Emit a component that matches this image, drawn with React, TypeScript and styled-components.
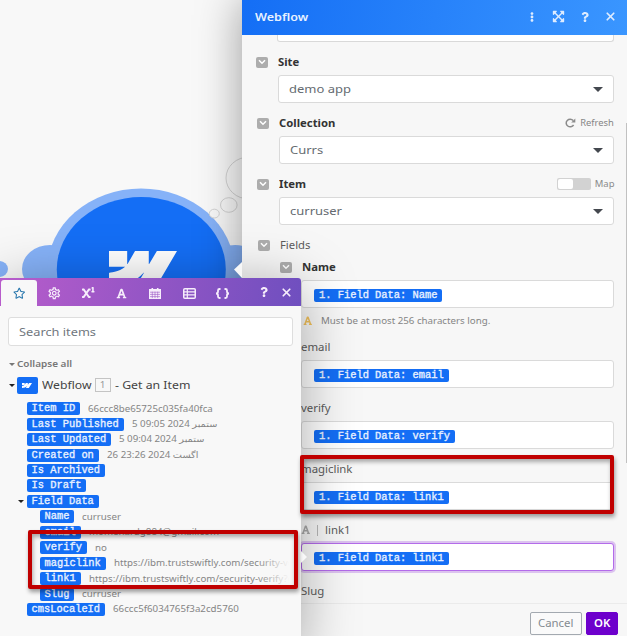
import React from "react";
import styled, { createGlobalStyle, css } from "styled-components";
import {
  FaRegStar,
  FaSuperscript,
  FaFont,
  FaExpandArrowsAlt,
  FaQuestion,
  FaEllipsisV,
} from "react-icons/fa";
import { MdOutlineSettings } from "react-icons/md";
import { X } from "lucide-react";

const GlobalStyle = createGlobalStyle`
  * { box-sizing: border-box; }
  body {
    margin: 0;
    overflow: hidden;
    font-family: "Noto Sans", "Open Sans", "DejaVu Sans", sans-serif;
  }
`;

const STRETCH = 1.13;

const Text = styled.span<{
  $size: number;
  $color?: string;
  $bold?: boolean;
  $weight?: number;
  $width?: number;
  $origin?: string;
}>`
  display: inline-block;
  flex: none;
  white-space: pre;
  font-size: ${(p) => p.$size / STRETCH}px;
  line-height: 1.2;
  color: ${(p) => p.$color ?? "#4d4d4d"};
  font-weight: ${(p) => p.$weight ?? (p.$bold ? 700 : 400)};
  transform: scaleX(${STRETCH});
  transform-origin: ${(p) => p.$origin ?? "left"} center;
  ${(p) => p.$width && css`width: ${p.$width}px;`}
`;

const Screen = styled.main`
  position: relative;
  display: flex;
  justify-content: flex-end;
  width: 627px;
  height: 636px;
  overflow: hidden;
  background: #f8f8f8;
`;

const Scene = styled.svg`
  position: absolute;
  left: 0;
  top: 0;
`;

/* ---------- settings panel ---------- */

const Settings = styled.section`
  position: relative;
  display: flex;
  flex-direction: column;
  width: 385px;
  height: 636px;
  background: #f7f7f7;
  box-shadow: 0 0 42px rgba(0, 0, 0, 0.38);
`;

const SettingsHeader = styled.header`
  display: flex;
  align-items: center;
  justify-content: space-between;
  flex: none;
  height: 35px;
  padding: 0 12px 2px 13px;
  background: linear-gradient(100deg, #146ef5, #3a96ff);
`;

const HeaderTools = styled.div`
  display: grid;
  grid-template-columns: 24px 28px 25px 26px;
  align-items: center;
  justify-items: center;
  color: #deecff;
  margin-right: -8px;
`;

const Form = styled.div`
  flex: 1;
  min-height: 0;
  overflow: hidden;
  padding-right: 13px;
`;

const CutField = styled.div`
  height: 7px;
  margin: 0 0 7px 35px;
  border: 1px solid #d9d9d9;
  border-top: 0;
  border-radius: 0 0 3px 3px;
  background: #fff;
`;

const Field = styled.div<{ $indent: number }>`
  height: 61px;
  padding-left: ${(p) => p.$indent}px;
`;

const LabelRow = styled.div<{ $gap?: number }>`
  display: flex;
  align-items: center;
  height: 26px;
  gap: ${(p) => p.$gap ?? 10}px;
`;

const GroupRow = styled(LabelRow)`
  height: 22px;
  padding: 4px 0 0 16px;
`;

const HintRow = styled.div`
  display: flex;
  align-items: center;
  height: 26px;
  margin-top: -7px;
  padding-left: 61px;
  gap: 8px;
`;

const LabelExtra = styled.span<{ $gap: number }>`
  display: flex;
  align-items: center;
  gap: ${(p) => p.$gap}px;
  margin-left: auto;
`;

const Box = styled.div<{ $offset?: number; $active?: boolean }>`
  display: flex;
  align-items: center;
  justify-content: space-between;
  height: 28px;
  margin-left: ${(p) => p.$offset ?? 0}px;
  padding: 0 10px;
  border: 1px solid #dadada;
  border-radius: 3px;
  background: #fff;
  ${(p) =>
    p.$active &&
    css`
      border-color: #b36bea;
      box-shadow: 0 0 0 2px #dcc3ef;
    `}
`;

const TokenBox = styled(Box)`
  padding: 2px 10px 0 12px;
`;

const Toggle = styled.span`
  display: flex;
  align-items: center;
  justify-content: center;
  flex: none;
  width: 12px;
  height: 11px;
  border-radius: 2px;
  background: #adadad;
`;

const Caret = styled.i<{ $size: number; $color: string }>`
  flex: none;
  border: ${(p) => p.$size}px solid transparent;
  border-top: ${(p) => p.$size}px solid ${(p) => p.$color};
  border-bottom: 0;
`;

const Pill = styled.span`
  flex: none;
  height: 13px;
  padding: 0 5px;
  border-radius: 2px;
  background: #146ef5;
  color: #e8f1ff;
  font: 10.4px/12px "Liberation Mono", monospace;
  -webkit-text-stroke: 0.35px #e8f1ff;
  white-space: pre;
`;

const Switch = styled.span`
  width: 34px;
  height: 12px;
  padding: 1px;
  border-radius: 2px;
  background: #d2d2d2;
  &::before {
    content: "";
    display: block;
    width: 15px;
    height: 10px;
    border-radius: 2px;
    background: #fff;
  }
`;

const Divider = styled.span`
  width: 1px;
  height: 11px;
  background: #b8b8b8;
`;

const Footer = styled.footer`
  display: flex;
  justify-content: flex-end;
  gap: 4px;
  flex: none;
  height: 33px;
  padding: 8px 9px 0 0;
  border-top: 1px solid #ebebeb;
`;

const Button = styled.button<{ $primary?: boolean }>`
  display: flex;
  align-items: center;
  justify-content: center;
  width: ${(p) => (p.$primary ? 32 : 52)}px;
  height: 23px;
  padding: 0;
  font-family: inherit;
  border: 1px solid ${(p) => (p.$primary ? "#6d00cc" : "#a3a9b0")};
  border-radius: 2px;
  background: ${(p) => (p.$primary ? "#6d00cc" : "#fafafa")};
`;

const Scrollbar = styled.div`
  position: absolute;
  right: 0;
  top: 123px;
  width: 1.5px;
  height: 340px;
  background: #c1c1c1;
`;

/* ---------- item picker ---------- */

const Picker = styled.section`
  position: absolute;
  left: 0;
  top: 278px;
  width: 301px;
  height: 370px;
  border-radius: 0 3px 0 0;
  background: #f8f8f8;
  box-shadow: 0 8px 56px rgba(0, 0, 0, 0.34);
`;

const Tabs = styled.nav`
  display: flex;
  align-items: flex-end;
  height: 28px;
  padding-left: 1px;
  border-radius: 0 3px 0 0;
  background: linear-gradient(100deg, #b85ccb, #6f4fbf);
  color: #f6edfb;
`;

const Tab = styled.span<{ $active?: boolean; $width?: number }>`
  display: flex;
  align-items: center;
  justify-content: center;
  width: ${(p) => p.$width ?? 33.6}px;
  height: 26px;
  padding-top: 1px;
  border-radius: 3px 3px 0 0;
  ${(p) =>
    p.$active &&
    css`
      background: #f8f8f8;
      color: #2877ad;
    `}
`;

const TabsEnd = styled.span`
  display: flex;
  align-items: center;
  justify-content: space-between;
  height: 28px;
  width: 34px;
  margin: 0 8px 0 auto;
`;

const Search = styled.div`
  display: flex;
  align-items: center;
  width: 285px;
  height: 29px;
  margin: 11px 0 0 7.5px;
  padding-left: 10px;
  border: 1px solid #dedede;
  border-radius: 3px;
  background: #fff;
`;

const CollapseRow = styled.div`
  display: flex;
  align-items: center;
  height: 12px;
  gap: 2.5px;
  margin: 12px 0 0 8.5px;
`;

const ModuleRow = styled.div`
  display: flex;
  align-items: center;
  height: 18px;
  margin: 6px 0 7px 8.5px;
`;

const ModuleLogo = styled.span`
  display: flex;
  align-items: center;
  justify-content: center;
  width: 20.5px;
  height: 17px;
  margin: 0 4.5px 0 2.5px;
  border-radius: 2px;
  background: #146ef5;
`;

const Badge = styled.span`
  display: flex;
  align-items: center;
  justify-content: center;
  width: 16px;
  height: 14px;
  margin-right: 4px;
  border: 1px solid #c4c4c4;
`;

const ItemList = styled.div`
  position: relative;
  width: 293px;
  overflow: hidden;
  &::after {
    content: "";
    position: absolute;
    top: 0;
    right: 0;
    width: 36px;
    height: 100%;
    background: linear-gradient(90deg, rgba(248, 248, 248, 0), #f8f8f8 90%);
  }
`;

const ItemRow = styled.div<{ $depth: number }>`
  display: flex;
  align-items: center;
  height: 15.46px;
  padding-left: ${(p) => (p.$depth === 2 ? 39.5 : 26.5)}px;
  gap: 8px;
`;

const RowCaret = styled.span`
  display: flex;
  width: 8px;
  margin: 0 -8px;
  transform: translateX(-1px);
`;

/* ---------- overlays ---------- */

const Highlight = styled.div<{ $x: number; $y: number; $w: number; $h: number }>`
  position: absolute;
  left: ${(p) => p.$x}px;
  top: ${(p) => p.$y}px;
  width: ${(p) => p.$w}px;
  height: ${(p) => p.$h}px;
  border: 4px solid #c00000;
  border-radius: 2px;
  box-shadow: 1px 3px 4px rgba(0, 0, 0, 0.38), inset 1px 3px 4px rgba(0, 0, 0, 0.32);
`;

const FieldNotch = styled.svg`
  position: absolute;
  left: 301px;
  top: 550px;
`;

const PanelNotch = styled.svg`
  position: absolute;
  left: 234px;
  top: 262px;
`;

const LOGO =
  "m24 4.515-7.658 14.97H9.149l3.205-6.204h-.144C9.566 16.713 5.621 18.973 0 19.485v-6.118s3.596-.213 5.71-2.435H0V4.515h6.417v5.278l.144-.001 2.622-5.277h4.854v5.244h.144l2.72-5.244H24Z";

const Chevron = () => (
  <Toggle>
    <svg width="8" height="6" viewBox="0 0 8 6">
      <path d="M1 1.3 4 4.2 7 1.3" fill="none" stroke="#fff" strokeWidth="1.5" />
    </svg>
  </Toggle>
);

const CalendarIcon = () => (
  <svg width="12" height="11" viewBox="0 0 12 12" preserveAspectRatio="none">
    <path d="M2.5 0h1.6v1.2h3.8V0h1.6v1.2H12V12H0V1.2h2.5Z" fill="currentColor" />
    <path d="M1 4.6h10M1 7h10M1 9.4h10M3.3 4v7M6 4v7M8.7 4v7" stroke="#9a55c6" strokeWidth=".6" />
  </svg>
);

const TableIcon = () => (
  <svg width="13" height="11" viewBox="0 0 13 11">
    <rect x=".75" y=".75" width="11.5" height="9.5" rx="1" fill="none" stroke="currentColor" strokeWidth="1.5" />
    <path d="M1 3.8h11M1 6.9h11M4.3 1v9" stroke="currentColor" strokeWidth="1.2" />
  </svg>
);

const BracesIcon = () => (
  <svg width="15" height="11" viewBox="0 0 15 11" fill="none" stroke="currentColor" strokeWidth="1.8">
    <path d="M5.5 1H4.6Q3 1 3 2.5v1.3Q3 5.5 1 5.5q2 0 2 1.7v1.3Q3 10 4.6 10h.9M9.5 1h.9Q12 1 12 2.5v1.3q0 1.7 2 1.7-2 0-2 1.7v1.3Q12 10 10.4 10h-.9" />
  </svg>
);

const RefreshIcon = () => (
  <svg width="11" height="10" viewBox="0 0 11 10" fill="none" stroke="#8b8b8b" strokeWidth="1.5">
    <path d="M8.6 7A4 3.7 0 1 1 8.2 2.6" />
    <path d="M10.3.4v4H6.2Z" fill="#8b8b8b" stroke="none" />
  </svg>
);

const SelectField = ({
  label,
  value,
  indent,
  extra,
}: {
  label: string;
  value: string;
  indent: number;
  extra?: React.ReactNode;
}) => (
  <Field $indent={indent}>
    <LabelRow>
      <Chevron />
      <Text $size={11.3} $bold $color="#333">{label}</Text>
      {extra}
    </LabelRow>
    <Box $offset={22}>
      <Text $size={13} $color="#656b71">{value}</Text>
      <Caret $size={5} $color="#44484f" />
    </Box>
  </Field>
);

const TokenField = (p: { label: string; token: string; active?: boolean; typed?: boolean }) => (
  <Field $indent={59}>
    <LabelRow $gap={6.5}>
      {p.typed && (
        <>
          <FaFont size={9.5} color="#a9a9a9" />
          <Divider />
        </>
      )}
      <Text $size={11.4} $color="#5c5c5c">{p.label}</Text>
    </LabelRow>
    <TokenBox $active={p.active}>
      <Pill>1. Field Data: {p.token}</Pill>
    </TokenBox>
  </Field>
);

const ITEMS: { name: string; value?: string; depth: number; open?: boolean }[] = [
  { name: "Item ID", value: "66ccc8be65725c035fa40fca", depth: 1 },
  { name: "Last Published", value: "5 09:05 2024 ستمبر", depth: 1 },
  { name: "Last Updated", value: "5 09:04 2024 ستمبر", depth: 1 },
  { name: "Created on", value: "26 23:26 2024 اگست", depth: 1 },
  { name: "Is Archived", depth: 1 },
  { name: "Is Draft", depth: 1 },
  { name: "Field Data", depth: 1, open: true },
  { name: "Name", value: "curruser", depth: 2 },
  { name: "email", value: "momenardg884@gmail.com", depth: 2 },
  { name: "verify", value: "no", depth: 2 },
  { name: "magiclink", value: "https://ibm.trustswiftly.com/security-ve", depth: 2 },
  { name: "link1", value: "https://ibm.trustswiftly.com/security-verify?e", depth: 2 },
  { name: "Slug", value: "curruser", depth: 2 },
  { name: "cmsLocaleId", value: "66ccc5f6034765f3a2cd5760", depth: 1 },
];

export default function App() {
  return (
    <>
      <GlobalStyle />
      <Screen>
        <Scene width="243" height="290" viewBox="0 0 243 290">
          <g fill="#86b2f8">
            <ellipse cx="-1" cy="269" rx="9" ry="8" />
            <ellipse cx="50" cy="269" rx="28" ry="24" />
            <ellipse cx="235" cy="269" rx="28" ry="24" />
            <ellipse cx="141" cy="269.5" rx="93.5" ry="81" />
          </g>
          <ellipse cx="141.3" cy="269.5" rx="84.5" ry="72.5" fill="#146ef5" />
          <svg x="109" y="251" width="68" height="37" viewBox="0 4.515 24 14.97" preserveAspectRatio="none">
            <path d={LOGO} fill="#fff" />
          </svg>
          <g fill="#f8f8f8" stroke="#d2d2d2">
            <ellipse cx="249" cy="178" rx="23" ry="21" />
            <ellipse cx="228.8" cy="205" rx="8.3" ry="7.3" />
            <ellipse cx="214.3" cy="213.6" rx="5" ry="4.4" />
          </g>
        </Scene>

        <Settings>
          <SettingsHeader>
            <Text $size={12.6} $weight={600} $color="#e8f2ff">Webflow</Text>
            <HeaderTools>
              <FaEllipsisV size={10} />
              <FaExpandArrowsAlt size={13} />
              <FaQuestion size={10} />
              <X size={13} strokeWidth={3.2} />
            </HeaderTools>
          </SettingsHeader>
          <Form>
            <CutField />
            <SelectField label="Site" value="demo app" indent={14} />
            <SelectField
              label="Collection"
              value="Currs"
              indent={14.5}
              extra={
                <LabelExtra $gap={8}>
                  <RefreshIcon />
                  <Text $size={9.4} $color="#858585" $origin="right">Refresh</Text>
                </LabelExtra>
              }
            />
            <SelectField
              label="Item"
              value="curruser"
              indent={15}
              extra={
                <LabelExtra $gap={6}>
                  <Switch />
                  <Text $size={9.5} $color="#8b8b8b" $origin="right">Map</Text>
                </LabelExtra>
              }
            />
            <GroupRow>
              <Chevron />
              <Text $size={11.3} $color="#5c5c5c">Fields</Text>
            </GroupRow>
            <Field $indent={37.5}>
              <LabelRow>
                <Chevron />
                <Text $size={11.3} $bold $color="#333">Name</Text>
              </LabelRow>
              <TokenBox $offset={21.5}>
                <Pill>1. Field Data: Name</Pill>
              </TokenBox>
            </Field>
            <HintRow>
              <FaFont size={9.5} color="#f2c15b" />
              <Text $size={9.75} $color="#858585">Must be at most 256 characters long.</Text>
            </HintRow>
            <TokenField label="email" token="email" />
            <TokenField label="verify" token="verify" />
            <TokenField label="magiclink" token="link1" />
            <TokenField label="link1" token="link1" active typed />
            <Field $indent={59}>
              <LabelRow>
                <Text $size={11.4} $color="#5c5c5c">Slug</Text>
              </LabelRow>
            </Field>
          </Form>
          <Footer>
            <Button><Text $size={11.4} $color="#858b91" $origin="center">Cancel</Text></Button>
            <Button $primary><Text $size={11.4} $weight={600} $color="#fff" $origin="center">OK</Text></Button>
          </Footer>
          <Scrollbar />
        </Settings>

        <Picker>
          <Tabs>
            <Tab $active $width={36}><FaRegStar size={12.5} /></Tab>
            <Tab $width={34.5}><MdOutlineSettings size={14.5} /></Tab>
            <Tab><FaSuperscript size={12.5} /></Tab>
            <Tab><FaFont size={11} /></Tab>
            <Tab><CalendarIcon /></Tab>
            <Tab><TableIcon /></Tab>
            <Tab><BracesIcon /></Tab>
            <TabsEnd><FaQuestion size={10} /><X size={13} strokeWidth={3.2} /></TabsEnd>
          </Tabs>
          <Search><Text $size={12.8} $color="#70777e">Search items</Text></Search>
          <CollapseRow>
            <Caret $size={3.5} $color="#777" />
            <Text $size={10} $weight={600} $color="#777">Collapse all</Text>
          </CollapseRow>
          <ModuleRow>
            <Caret $size={3.5} $color="#222" />
            <ModuleLogo>
              <svg width="10" height="5" viewBox="0 4.515 24 14.97" preserveAspectRatio="none">
                <path d={LOGO} fill="#fff" />
              </svg>
            </ModuleLogo>
            <Text $size={12.2} $width={53} $color="#444">Webflow</Text>
            <Badge><Text $size={10} $color="#999" $origin="center">1</Text></Badge>
            <Text $size={12.3} $color="#444">- Get an Item</Text>
          </ModuleRow>
          <ItemList>
            {ITEMS.map((it) => (
              <ItemRow key={it.name} $depth={it.depth}>
                {it.open && <RowCaret><Caret $size={3} $color="#222" /></RowCaret>}
                <Pill>{it.name}</Pill>
                {it.value && <Text $size={9.75} $color="#858585">{it.value}</Text>}
              </ItemRow>
            ))}
          </ItemList>
        </Picker>

        <PanelNotch width="8" height="16"><path d="M8 0v16L0 7.5Z" fill="#f7f7f7" /></PanelNotch>
        <FieldNotch width="6" height="14"><path d="M0 1v12L6 7Z" fill="#f8f8f8" /></FieldNotch>
        <Highlight $x={300} $y={455} $w={314} $h={59} />
        <Highlight $x={28} $y={530} $w={270} $h={59} />
      </Screen>
    </>
  );
}
